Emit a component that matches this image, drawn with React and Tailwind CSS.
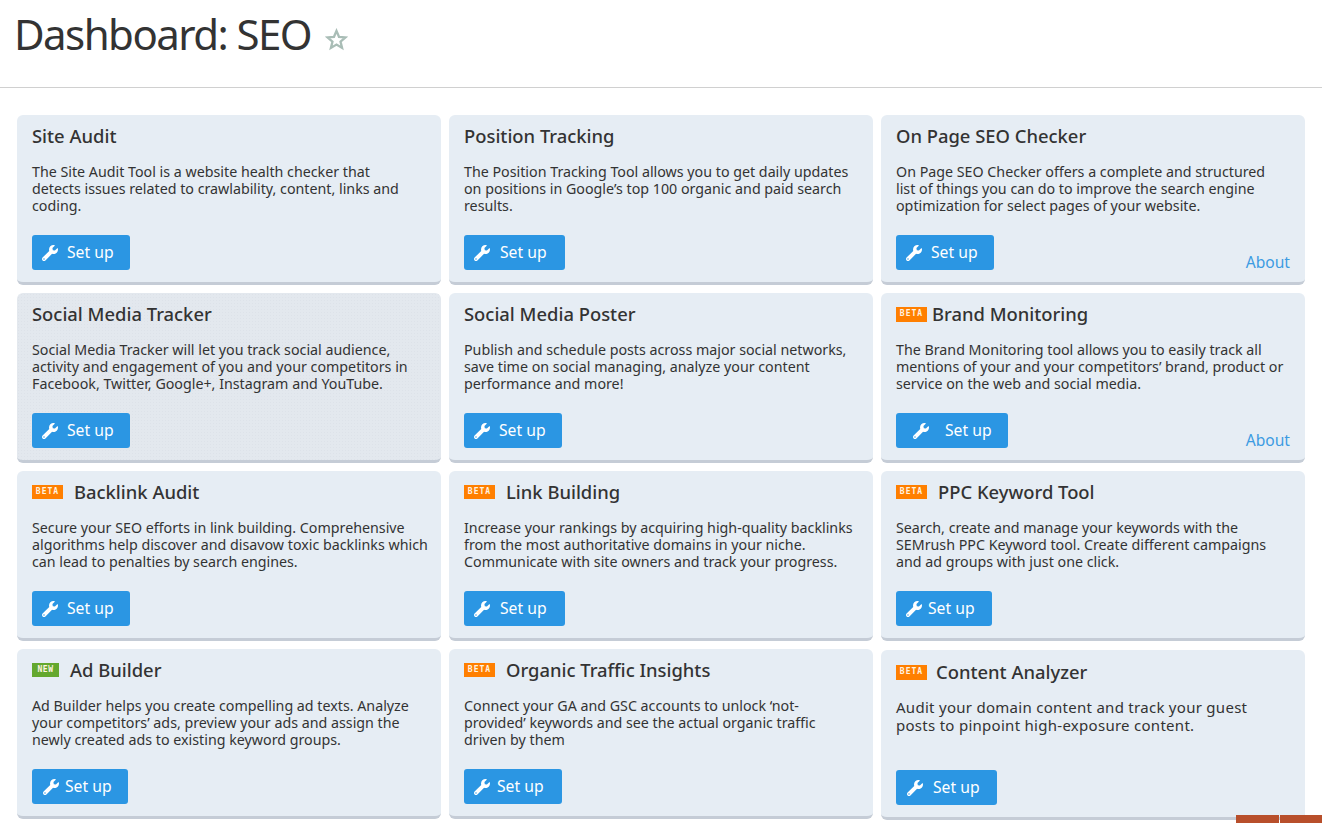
import { FaWrench } from "react-icons/fa";

const cards = [
  { title: "Site Audit", text: ["The Site Audit Tool is a website health checker that", "detects issues related to crawlability, content, links and", "coding."], btn: "w-[98px] pl-[10px] gap-[9px]" },
  { title: "Position Tracking", text: ["The Position Tracking Tool allows you to get daily updates", "on positions in Google’s top 100 organic and paid search", "results."], btn: "w-[101px] pl-[10px] gap-[10px]" },
  { title: "On Page SEO Checker", text: ["On Page SEO Checker offers a complete and structured", "list of things you can do to improve the search engine", "optimization for select pages of your website."], btn: "w-[98px] pl-[10px] gap-[9px]", about: true },
  { title: "Social Media Tracker", text: ["Social Media Tracker will let you track social audience,", "activity and engagement of you and your competitors in", "Facebook, Twitter, Google+, Instagram and YouTube."], btn: "w-[98px] pl-[10px] gap-[9px]", bg: "bg-[#e3e8ee] bg-[radial-gradient(#dde2e9_1px,transparent_1px)] bg-[length:3px_3px]" },
  { title: "Social Media Poster", text: ["Publish and schedule posts across major social networks,", "save time on social managing, analyze your content", "performance and more!"], btn: "w-[98px] pl-[10px] gap-[9px]" },
  { title: "Brand Monitoring", badge: "BETA", titleGap: "gap-[5px]", badgeSize: "h-[15px]", text: ["The Brand Monitoring tool allows you to easily track all", "mentions of your and your competitors’ brand, product or", "service on the web and social media."], btn: "w-[112px] pl-[17px] gap-[16px]", about: true },
  { title: "Backlink Audit", badge: "BETA", titleGap: "gap-[11px]", text: ["Secure your SEO efforts in link building. Comprehensive", "algorithms help discover and disavow toxic backlinks which", "can lead to penalties by search engines."], btn: "w-[98px] pl-[10px] gap-[9px]" },
  { title: "Link Building", badge: "BETA", titleGap: "gap-[11px]", text: ["Increase your rankings by acquiring high-quality backlinks", "from the most authoritative domains in your niche.", "Communicate with site owners and track your progress."], btn: "w-[101px] pl-[10px] gap-[10px]" },
  { title: "PPC Keyword Tool", badge: "BETA", titleGap: "gap-[11px]", text: ["Search, create and manage your keywords with the", "SEMrush PPC Keyword tool. Create different campaigns", "and ad groups with just one click."], btn: "w-[96px] pl-[10px] gap-[6px]" },
  { title: "Ad Builder", badge: "NEW", titleGap: "gap-[11px]", text: ["Ad Builder helps you create compelling ad texts. Analyze", "your competitors’ ads, preview your ads and assign the", "newly created ads to existing keyword groups."], btn: "w-[96px] pl-[11px] gap-[6px]" },
  { title: "Organic Traffic Insights", badge: "BETA", titleGap: "gap-[11px]", text: ["Connect your GA and GSC accounts to unlock ‘not-", "provided’ keywords and see the actual organic traffic", "driven by them"], btn: "w-[98px] pl-[10px] gap-[7px]" },
  { title: "Content Analyzer", badge: "BETA", titleGap: "gap-[9px]", badgeSize: "h-[15px]", text: ["Audit your domain content and track your guest", "posts to pinpoint high-exposure content."], btn: "w-[101px] pl-[11px] gap-[10px]", large: true },
];

const Badge = ({ label, size }) => (
  <span
    className={`flex shrink-0 items-center justify-center font-['DejaVu_Sans_Mono',monospace] text-[8px] leading-none font-bold text-[#fff3e0] ${
      size || "h-[14px]"
    } ${label === "NEW" ? "w-[27px] bg-[#64a82e] tracking-[0.5px]" : "w-[31px] bg-[#ff7f00] tracking-[1px]"}`}
  >
    {label}
  </span>
);

const Card = ({ card }) => (
  <div
    className={`relative flex h-[170px] flex-col rounded-md border-b-[3px] border-[#c5ccd6] px-[15px] ${
      card.bg || "bg-[#e6edf4]"
    } ${card.large ? "mt-px pt-[10px]" : "pt-[9px]"}`}
  >
    <div className={`flex h-[24px] items-center ${card.titleGap || ""}`}>
      {card.badge && <Badge label={card.badge} size={card.badgeSize} />}
      <h2 className="text-[18.4px] leading-[24px] font-medium text-[#333]">{card.title}</h2>
    </div>
    <div
      className={`h-[63px] whitespace-nowrap text-[#333] ${
        card.large ? "mt-[14px] text-[15px] leading-[18px] tracking-[0.28px]" : "mt-[15px] text-[14.25px] leading-[17px]"
      }`}
    >
      {card.text.map((line) => (
        <p key={line}>{line}</p>
      ))}
    </div>
    <button
      className={`mt-[9px] flex h-[35px] items-center justify-start rounded-[3px] bg-[#2b96e3] pt-px text-[15.7px] text-white ${card.btn}`}
    >
      <FaWrench className="h-[16px] w-[16px] shrink-0" />
      Set up
    </button>
    {card.about && (
      <a className="absolute right-[15px] bottom-[10px] text-[15.6px] leading-[20px] text-[#3c9be2]">About</a>
    )}
  </div>
);

export default function App() {
  return (
    <div className="relative h-[823px] overflow-hidden bg-white font-['Noto_Sans',sans-serif]">
      <header className="flex h-[88px] items-start gap-[14px] border-b border-[#d0d0d0] pt-[5px] pl-[14px]">
        <h1 className="text-[42px] leading-[58px] font-normal tracking-[-1.55px] text-[#333]">Dashboard: SEO</h1>
        <svg viewBox="0 0 24 24" className="mt-[23px] h-[23px] w-[23px]" fill="none" stroke="#a9bdb6" strokeWidth="2.4">
          <polygon points="12,3 14.6,9.2 21.4,9.8 16.2,14.2 17.8,20.8 12,17.3 6.2,20.8 7.8,14.2 2.6,9.8 9.4,9.2" />
        </svg>
      </header>
      <main className="grid grid-cols-3 gap-x-2 gap-y-2 px-[17px] pt-[27px]">
        {cards.map((card) => (
          <Card key={card.title} card={card} />
        ))}
      </main>
      <div className="absolute right-0 bottom-0 flex h-2 w-[86px] gap-px">
        <div className="flex-1 bg-[#b84f2b]" />
        <div className="flex-1 bg-[#b84f2b]" />
      </div>
    </div>
  );
}
